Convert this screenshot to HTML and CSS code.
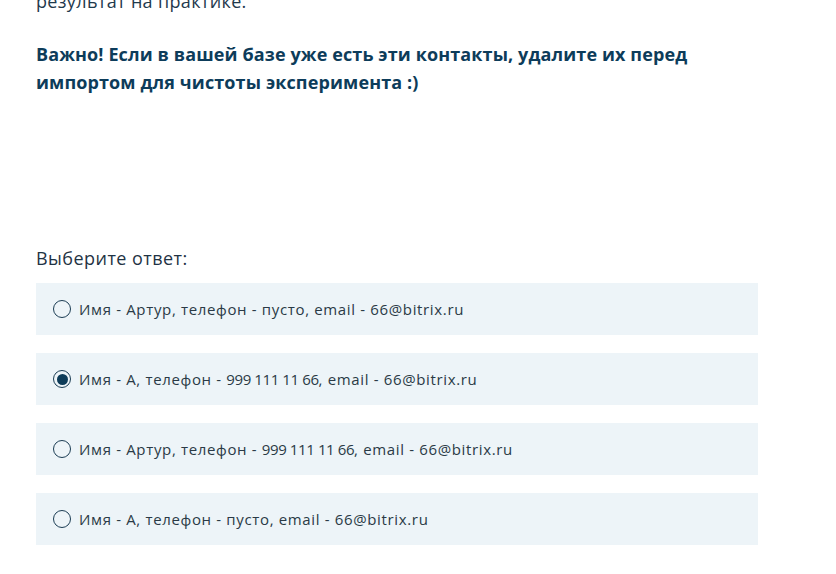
FILE: index.html
```html
<!DOCTYPE html>
<html lang="ru">

<head>
    <meta charset="UTF-8">
    <meta name="viewport" content="width=device-width, initial-scale=1.0">
    <title>Тест</title>
    <link rel="stylesheet" href="styles.css">
</head>

<body>
    <div class="lesson">
        <p class="text">результат на практике.</p>
        <p class="text important">Важно! Если в вашей базе уже есть эти контакты, удалите их перед импортом для чистоты эксперимента :)</p>

        <div class="quiz">
            <p class="quiz-title">Выберите ответ:</p>
            <label class="answer">
                <input type="radio" name="answer">
                <span class="mark"></span>
                <span>Имя - Артур, телефон - пусто, email - 66@bitrix.ru</span>
            </label>
            <label class="answer">
                <input type="radio" name="answer" checked>
                <span class="mark"></span>
                <span>Имя - А, телефон - <span class="num">999 111 11 66</span>, email - 66@bitrix.ru</span>
            </label>
            <label class="answer">
                <input type="radio" name="answer">
                <span class="mark"></span>
                <span>Имя - Артур, телефон - <span class="num">999 111 11 66</span>, email - 66@bitrix.ru</span>
            </label>
            <label class="answer">
                <input type="radio" name="answer">
                <span class="mark"></span>
                <span>Имя - А, телефон - пусто, email - 66@bitrix.ru</span>
            </label>
        </div>
    </div>
</body>

</html>
```

FILE: styles.css
```css
body {
    margin: 0;
    padding: 0;
    background-color: #fff;
    font-family: 'Open Sans', sans-serif;
    color: #22313b;
}

.lesson {
    width: 722px;
    margin-top: -13px;
    padding-left: 36px;
}

.text {
    margin: 0 0 25px;
    font-size: 18px;
    line-height: 28px;
    letter-spacing: 0.35px;
    color: #1f3a4d;
}

.important {
    font-weight: 700;
    color: #0d3c5a;
    width: 700px;
    letter-spacing: 0.12px;
}

.quiz {
    margin-top: 149px;
}

.quiz-title {
    margin: 0 0 12px;
    font-size: 18px;
    line-height: 26px;
    letter-spacing: 0.45px;
    color: #1f3344;
}

.answer {
    display: flex;
    align-items: center;
    gap: 8px;
    height: 52px;
    margin-bottom: 18px;
    padding-left: 17px;
    background-color: #edf4f8;
    font-size: 15px;
    letter-spacing: 0.65px;
    color: #2a3a46;
    cursor: pointer;
}

.num {
    letter-spacing: -0.4px;
}

.answer input {
    display: none;
}

.mark {
    box-sizing: border-box;
    width: 18px;
    height: 18px;
    border: 1.5px solid #1c3d54;
    border-radius: 50%;
    flex-shrink: 0;
    display: flex;
    align-items: center;
    justify-content: center;
}

.answer input:checked + .mark::after {
    content: "";
    width: 11px;
    height: 11px;
    border-radius: 50%;
    background-color: #0d3b58;
}
```
